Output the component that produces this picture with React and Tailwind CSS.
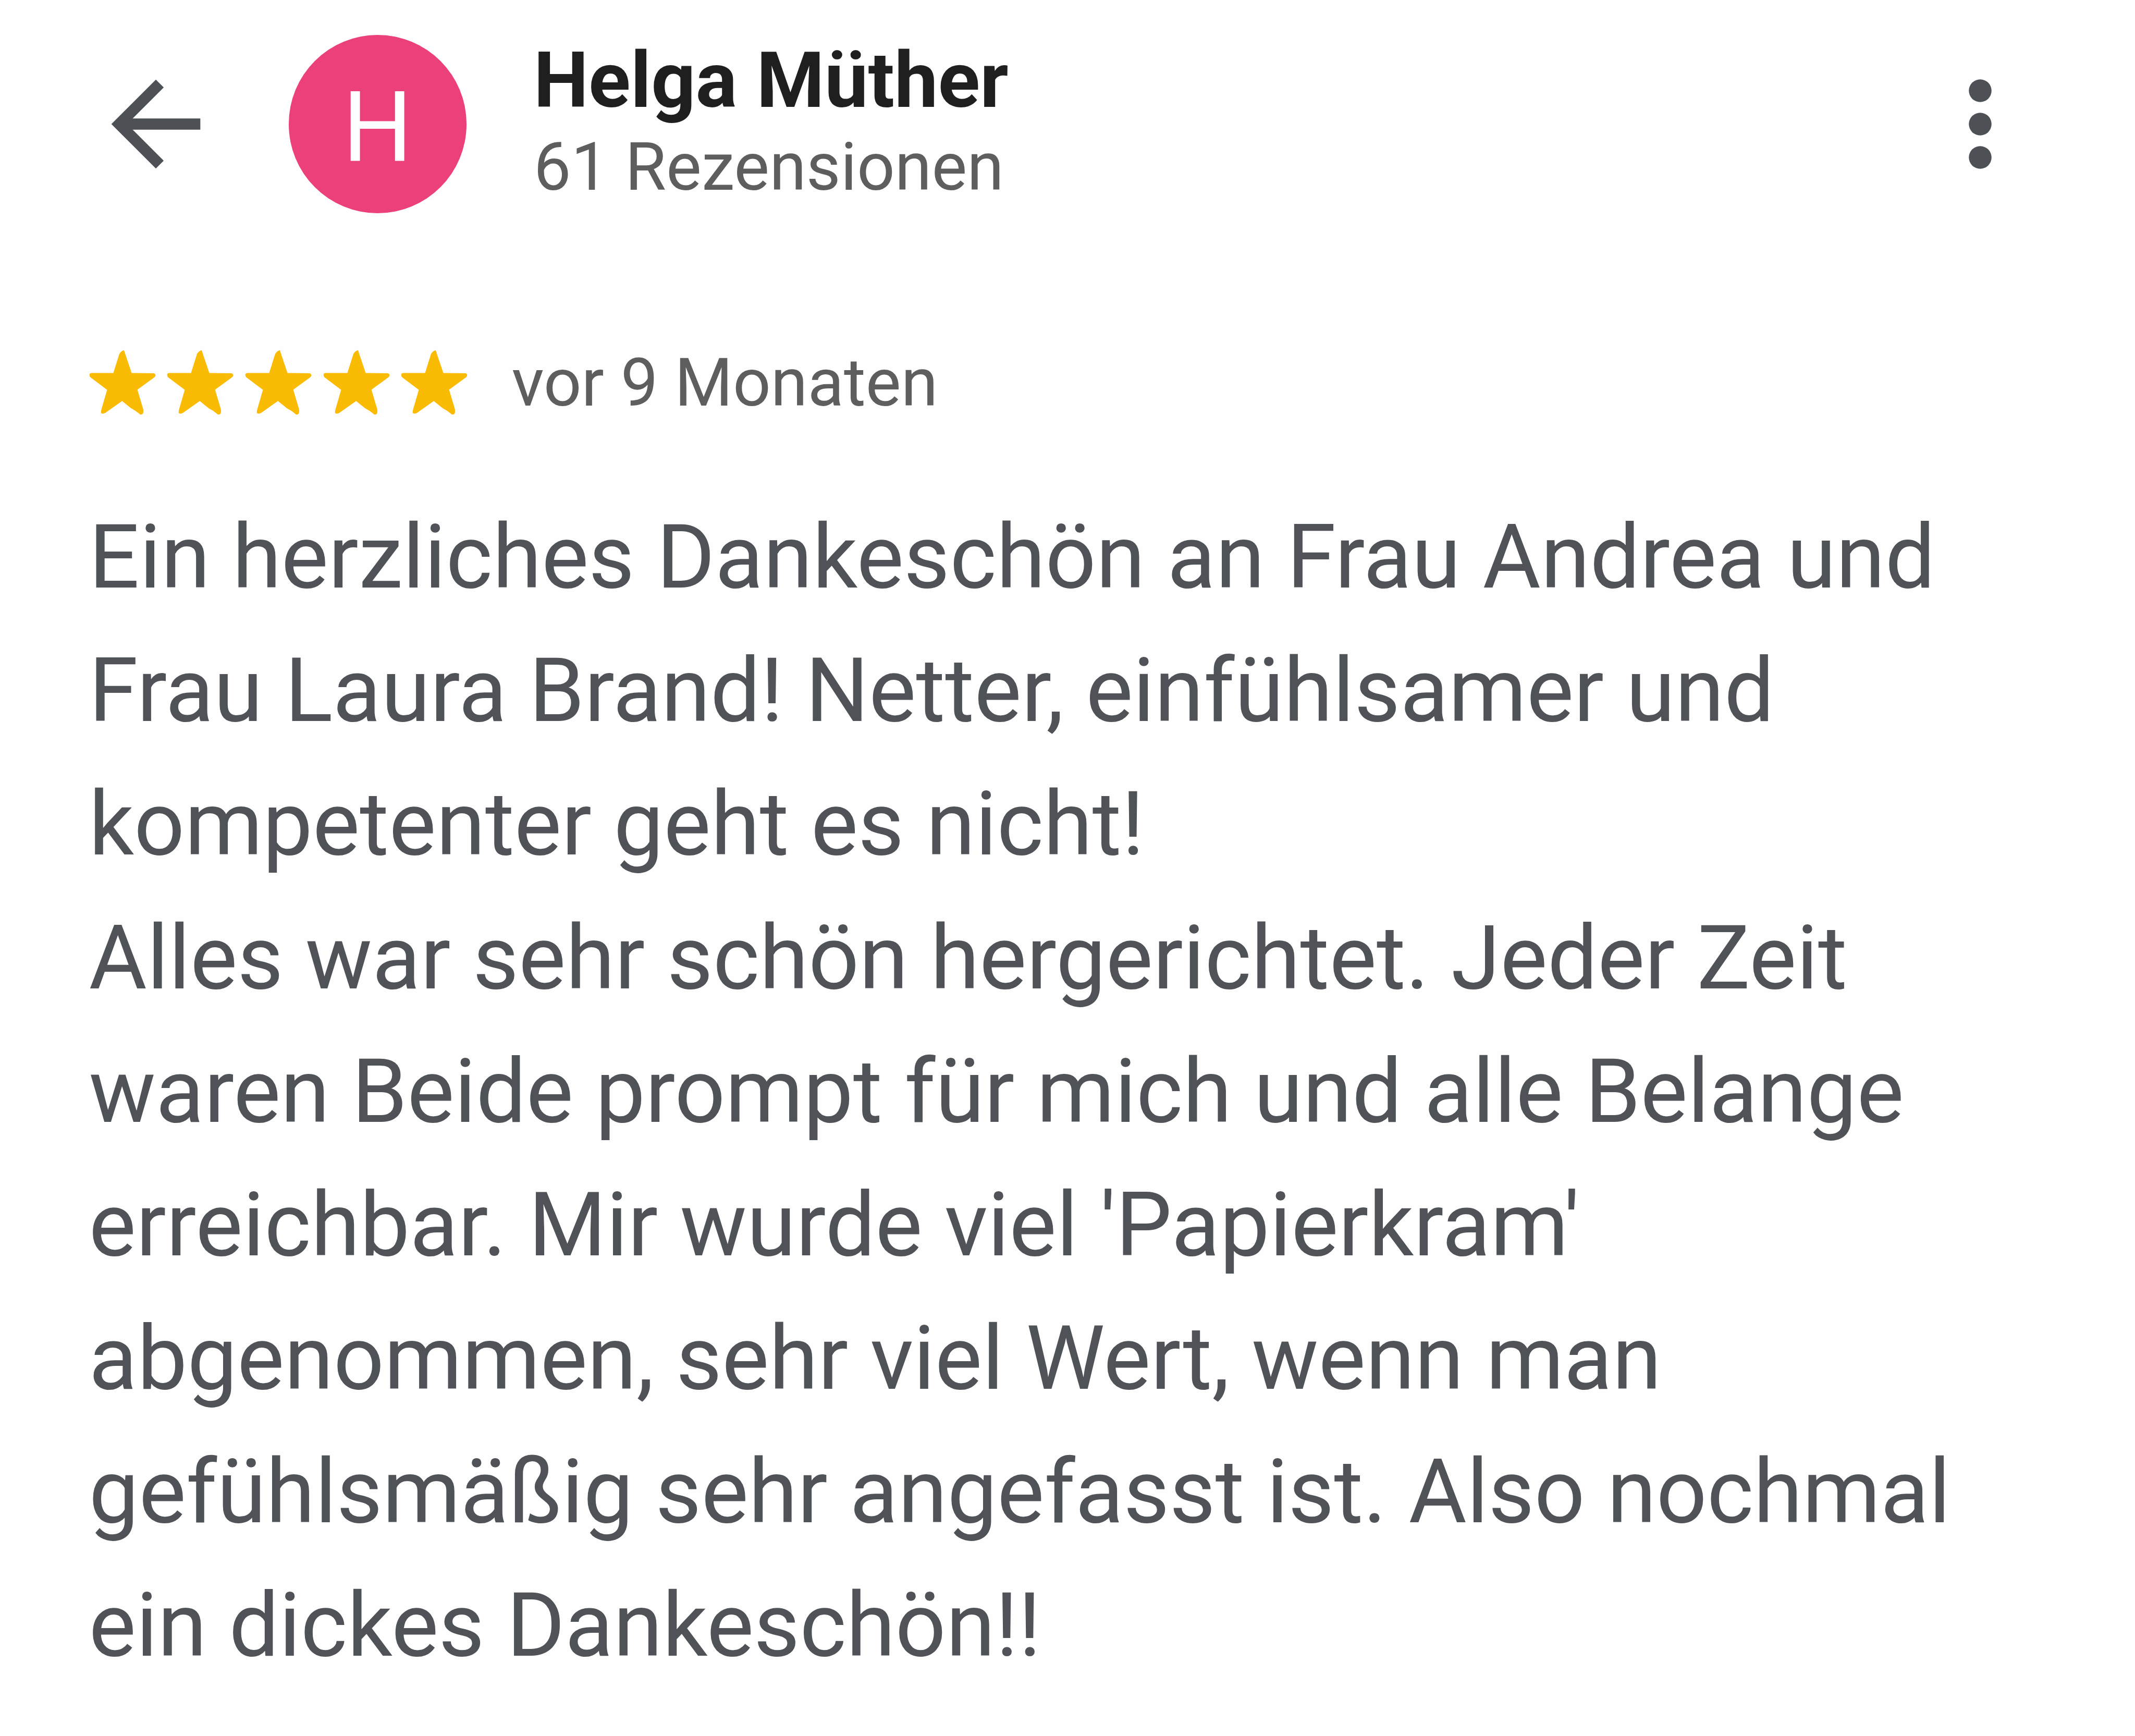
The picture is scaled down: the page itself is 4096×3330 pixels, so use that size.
const reviewLines = [
  "Ein herzliches Dankeschön an Frau Andrea und",
  "Frau Laura Brand! Netter, einfühlsamer und",
  "kompetenter geht es nicht!",
  "Alles war sehr schön hergerichtet. Jeder Zeit",
  "waren Beide prompt für mich und alle Belange",
  "erreichbar. Mir wurde viel 'Papierkram'",
  "abgenommen, sehr viel Wert, wenn man",
  "gefühlsmäßig sehr angefasst ist. Also nochmal",
  "ein dickes Dankeschön!!",
];

function BackIcon() {
  return (
    <svg viewBox="0 0 24 24" className="size-[256px]" fill="currentColor">
      <path d="M20 11H7.83l5.59-5.59L12 4l-8 8 8 8 1.41-1.41L7.83 13H20v-2z" />
    </svg>
  );
}

function MoreIcon() {
  return (
    <svg viewBox="0 0 24 24" className="size-[256px]" fill="currentColor">
      <circle cx="12" cy="6" r="2.04" />
      <circle cx="12" cy="12" r="2.04" />
      <circle cx="12" cy="18" r="2.04" />
    </svg>
  );
}

function Star() {
  return (
    <svg viewBox="30 55 405 398" className="h-[125.8px] w-[128px]" fill="currentColor">
      <path d="M177 196L212 84Q218 66 240 57Q244 60 247 74L288 196L424 197Q436 203 432 214L427 221L323 297L358 415Q362 440 352 446Q340 452 333 442Q310 422 285 410L230 366L128 438Q112 446 102 439Q101 425 108 405L139 298L38 222Q30 212 33 202Q36 196 45 196Z" />
    </svg>
  );
}

export default function App() {
  return (
    <main className="h-[3330px] w-[4096px] overflow-hidden bg-[#fefefe] font-['Roboto',sans-serif]">
      <header className="flex h-[476px] items-center pr-[169px] pl-[170.6px] text-[#4d5156]">
        <button type="button" aria-label="Zurück">
          <BackIcon />
        </button>
        <div className="ml-[127px] flex size-[341.2px] justify-center rounded-full bg-[#ec407a] pt-[8px] text-[188px] leading-[341px] font-[450] text-white">
          H
        </div>
        <div className="ml-[129px] self-start pt-[68.5px] whitespace-nowrap">
          <h1 className="text-[149.2px] leading-[170px] font-bold text-[#1f1f1f]">Helga Müther</h1>
          <p className="mt-[6.2px] text-[127.9px] leading-[150px] text-[#5e5e5e]">61 Rezensionen</p>
        </div>
        <button type="button" aria-label="Mehr" className="ml-auto">
          <MoreIcon />
        </button>
      </header>

      <div className="mt-[182.7px] flex pl-[170.6px]">
        <div className="mt-[12.8px] flex gap-[21.7px] text-[#f9bb04]">
          {[1, 2, 3, 4, 5].map((n) => (
            <Star key={n} />
          ))}
        </div>
        <span className="ml-[84.3px] text-[127.9px] leading-[150px] whitespace-nowrap text-[#5e5e5e]">
          vor 9 Monaten
        </span>
      </div>

      <p className="mt-[132.6px] pl-[170.6px] text-[170.65px] leading-[256.1px] whitespace-nowrap text-[#4f5257]">
        {reviewLines.map((line) => (
          <span key={line} className="block">
            {line}
          </span>
        ))}
      </p>
    </main>
  );
}
